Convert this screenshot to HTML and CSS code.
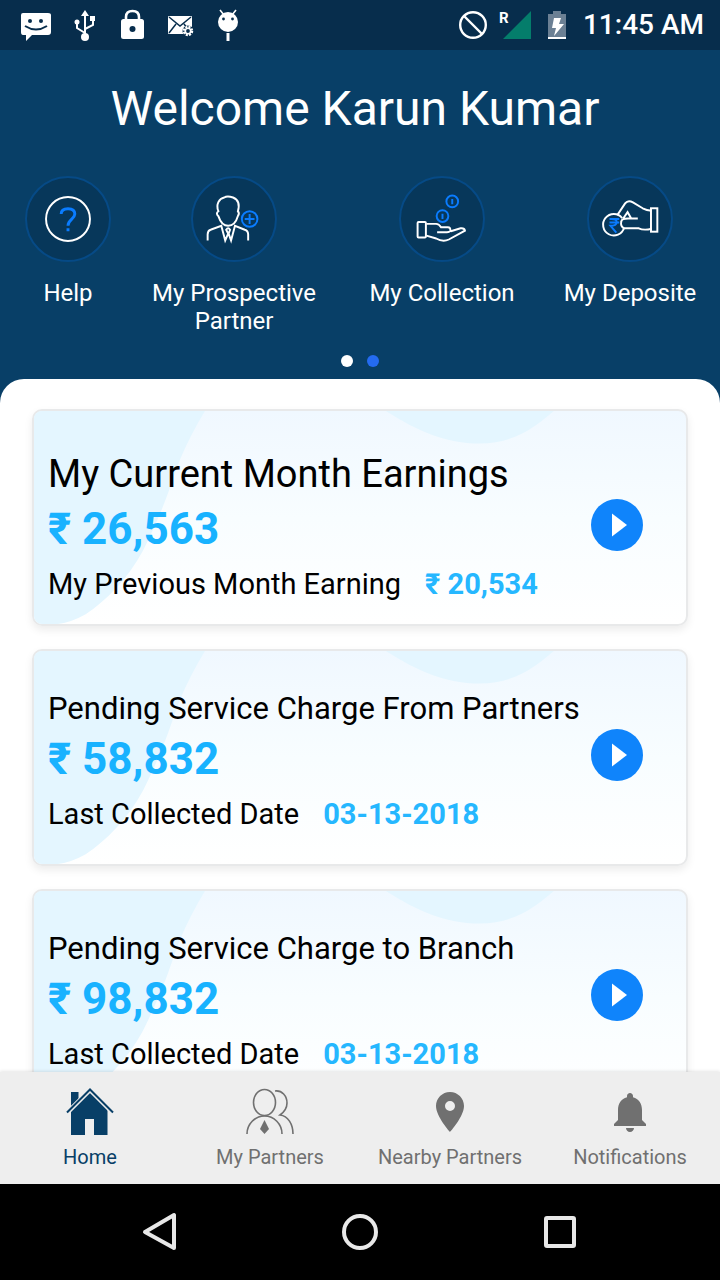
FILE: index.html
```html
<!DOCTYPE html>
<html lang="en">
<head>
<meta charset="utf-8">
<meta name="viewport" content="width=device-width, initial-scale=1">
<title>Partner Home</title>
<link rel="stylesheet" href="styles.css">
</head>
<body>
<svg width="0" height="0" class="defs" aria-hidden="true">
  <symbol id="card-decor" viewBox="0 0 656 216" preserveAspectRatio="none">
    <path d="M0 0H172Q157 25 147 49C137 75 134 92 110 141C94 171 72 193 52 206Q38 214 24 216H0Z"/>
    <path d="M354 0C385 20 415 33 448 33C485 33 505 15 523 0Z"/>
  </symbol>
  <symbol id="play" viewBox="0 0 52 52">
    <circle cx="26" cy="26" r="26" fill="#0f84fb"/>
    <path d="M21 14.500L36 26L21 37.500Z" fill="#fff"/>
  </symbol>
</svg>
<div class="app">
  <div class="status">
    <div class="status-left">
      <svg width="32" height="32" viewBox="0 0 32 32"><path fill="#fff" d="M3 5H28Q31 5 31 7V24Q31 27 28 27H12L6 33V27H3Q1 27 1 24V7Q1 5 3 5Z" transform="translate(0 -1)"/><circle cx="10" cy="12" r="2" fill="#072d4c"/><circle cx="21" cy="12" r="2" fill="#072d4c"/><path d="M5 17Q16 24 27 17" fill="none" stroke="#072d4c" stroke-width="2"/></svg>
      <svg width="32" height="32" viewBox="0 0 32 32"><g fill="none" stroke="#fff" stroke-width="2"><path d="M17 27V7M17 24L9 19V13M17 20L25 16V10"/></g><path fill="#fff" d="M17 1L21 7H13ZM22 7H27V12H22Z"/><circle cx="9" cy="13" r="2.500" fill="#fff"/><circle cx="17" cy="28" r="4" fill="#fff"/></svg>
      <svg width="32" height="32" viewBox="0 0 32 32"><path d="M10 11V8Q10 2 16.500 2Q23 2 23 8V11" fill="none" stroke="#fff" stroke-width="2.600"/><rect x="5" y="10" width="23" height="20" rx="2.500" fill="#fff"/><circle cx="16.500" cy="20" r="3" fill="#072d4c"/></svg>
      <svg width="32" height="32" viewBox="0 0 32 32"><rect x="4" y="7" width="24" height="18" rx="1" fill="#fff"/><path d="M5 8L16 17L27 8M5 24L12 15M27 24L20 15" fill="none" stroke="#072d4c" stroke-width="1.500"/><circle cx="24" cy="22" r="5.500" fill="#072d4c"/><circle cx="24" cy="22" r="4" fill="none" stroke="#fff" stroke-width="2.500" stroke-dasharray="2 1.140"/><circle cx="24" cy="22" r="2.700" fill="none" stroke="#fff" stroke-width="1.600"/></svg>
      <svg width="32" height="32" viewBox="0 0 32 32"><circle cx="16" cy="13" r="10" fill="#fff"/><path d="M8 1L12 6M24 1L20 6" stroke="#fff" stroke-width="1.600"/><path d="M14.500 24H17.500V32H14.500Z" fill="#fff"/><circle cx="11.500" cy="10" r="1.400" fill="#072d4c"/><circle cx="20.500" cy="10" r="1.400" fill="#072d4c"/></svg>
    </div>
    <div class="status-right">
      <svg width="28" height="28" viewBox="0 0 28 28" fill="none" stroke="#fff" stroke-width="2.400"><circle cx="14" cy="14" r="12.800"/><path d="M5 5L23 23"/></svg>
      <div class="signal"><span class="roaming">R</span><svg width="28" height="28" viewBox="0 0 28 28"><path d="M28 0V28H0Z" fill="#047d6b"/></svg></div>
      <svg width="20" height="30" viewBox="0 0 20 30"><path d="M6 1H14V4H19V27H1V4H6Z" fill="#6b8094"/><path d="M1 27H19V29H1Z" fill="#fff"/><path d="M7 8H14L12 14H17L7 26L9 18H5Z" fill="#fff"/></svg>
      <time>11:45 AM</time>
    </div>
  </div>

  <header class="header">
    <h1>Welcome Karun Kumar</h1>
    <div class="shortcuts">
      <button type="button" class="shortcut">
        <svg class="disc" viewBox="0 0 84 84"><circle cx="42" cy="42" r="22.500"/><path class="blue bold" d="M35 37Q35 31.500 42 31.500Q49 31.500 49 37C49 42 42 42.500 42 49M42 51.500V54.500"/></svg>
        <span>Help</span>
      </button>
      <button type="button" class="shortcut">
        <svg class="disc" viewBox="0 0 84 84"><path d="M26 34C23 27 27 21 32 20C35 18 38 19 41 20C46 22 48 27 46 34Q48 36 46 39C44 46 41 49 36 49C31 49 28 45 26 39Q23 36 26 34ZM15 64V58Q15 54 18 53L29 49L33 64L36 57L34 53Q36 50 38 53L36.500 57L39 64L43 49L53 53Q56.500 54 56.500 58V64"/><g class="blue"><circle cx="58" cy="42" r="8"/><path d="M58 37V47M53 42H63"/></g></svg>
        <span>My Prospective Partner</span>
      </button>
      <button type="button" class="shortcut">
        <svg class="disc" viewBox="0 0 84 84"><rect x="17" y="45" width="8.500" height="16" rx="1"/><path d="M26 47H36Q39 47 41 50.500H48Q51 50.500 50.500 54Q50 55.500 47 55.500H37M51 54.500L61 51.500Q65 51 65.500 54L49 63Q43 66 36 62L26 59"/><g class="blue"><circle cx="52.500" cy="24" r="6"/><circle cx="42.500" cy="39" r="6"/><path d="M52.500 21.500V27M42.500 36.500V42"/></g></svg>
        <span>My Collection</span>
      </button>
      <button type="button" class="shortcut">
        <svg class="disc" viewBox="0 0 84 84"><path d="M29 38L37 26Q40 22 45 25L55 31Q59 33 64 33.500M64 52Q56 54 51 51.500H36Q32 50 33 45C33 42 37 41.500 40 41.500H50M35 41.500L39.500 35L43 41"/><rect x="63.500" y="31" width="6.500" height="24"/><path d="M34 41A11 11 0 1 0 36 51"/><path class="blue" d="M21 42H31M21 45.500H31M23 42Q28.500 42 28.500 45.500Q28 49 22 49L28 56"/></svg>
        <span>My Deposite</span>
      </button>
    </div>
    <div class="dots"><i class="dot"></i><i class="dot dot-blue"></i></div>
  </header>

  <main class="sheet">
    <section class="card">
      <svg class="decor" aria-hidden="true"><use href="#card-decor"/></svg>
      <h2 class="card-title large">My Current Month Earnings</h2>
      <div class="amount-row"><strong class="amount">₹ 26,563</strong><button type="button" class="play" aria-label="Open current month earnings"><svg width="52" height="52"><use href="#play"/></svg></button></div>
      <p class="detail"><span>My Previous Month Earning</span><strong>₹ 20,534</strong></p>
    </section>
    <section class="card">
      <svg class="decor" aria-hidden="true"><use href="#card-decor"/></svg>
      <h2 class="card-title">Pending Service Charge From Partners</h2>
      <div class="amount-row"><strong class="amount">₹ 58,832</strong><button type="button" class="play" aria-label="Open service charge from partners"><svg width="52" height="52"><use href="#play"/></svg></button></div>
      <p class="detail"><span>Last Collected Date</span><strong>03-13-2018</strong></p>
    </section>
    <section class="card">
      <svg class="decor" aria-hidden="true"><use href="#card-decor"/></svg>
      <h2 class="card-title">Pending Service Charge to Branch</h2>
      <div class="amount-row"><strong class="amount">₹ 98,832</strong><button type="button" class="play" aria-label="Open service charge to branch"><svg width="52" height="52"><use href="#play"/></svg></button></div>
      <p class="detail"><span>Last Collected Date</span><strong>03-13-2018</strong></p>
    </section>
  </main>

  <nav class="tabs">
    <a href="#" class="tab active">
      <svg width="48" height="48" viewBox="0 0 48 48"><path fill="currentColor" d="M5 4H12.500V13L5 20ZM5 21L24 4L41.500 21V47H28V31H19V47H5Z"/><path d="M1 25L24 2L47 25" fill="none" stroke="#eee" stroke-width="4.500"/><path d="M1 24.500L24 1.500L47 24.500" fill="none" stroke="currentColor" stroke-width="2"/></svg>
      <span>Home</span>
    </a>
    <a href="#" class="tab">
      <svg width="48" height="48" viewBox="0 0 48 48"><g fill="none" stroke="currentColor" stroke-width="1.600"><ellipse cx="18.500" cy="14.500" rx="11" ry="13"/><path d="M1 46C1 36 9 28 18.500 28C28 28 36 36 36 46M29 3C36 2 41 8 41 15Q41 22 34 27C42 28 47 36 47 46"/></g><path fill="currentColor" d="M18.500 32L23 41L18.500 46L14 41Z"/></svg>
      <span>My Partners</span>
    </a>
    <a href="#" class="tab">
      <svg width="48" height="48" viewBox="0 0 24 24"><path fill="currentColor" fill-rule="evenodd" d="M12 2C8.130 2 5 5.130 5 9c0 5.250 7 13 7 13s7-7.750 7-13c0-3.870-3.130-7-7-7zm0 9.500a2.500 2.500 0 0 1 0-5 2.500 2.500 0 0 1 0 5z"/></svg>
      <span>Nearby Partners</span>
    </a>
    <a href="#" class="tab">
      <svg width="48" height="48" viewBox="0 0 24 24"><path fill="currentColor" d="M12 22c1.100 0 2-.9 2-2h-4c0 1.100.89 2 2 2zm6-6v-5c0-3.070-1.640-5.640-4.500-6.320V4c0-.83-.67-1.500-1.500-1.500s-1.500.67-1.500 1.500v.68C7.630 5.360 6 7.920 6 11v5l-2 2v1h16v-1l-2-2z"/></svg>
      <span>Notifications</span>
    </a>
  </nav>

  <div class="system">
    <button type="button" aria-label="Back"><svg width="40" height="40" viewBox="0 0 40 40"><path d="M34 3V36L5 20Z"/></svg></button>
    <button type="button" aria-label="Home screen"><svg width="40" height="40" viewBox="0 0 40 40"><circle cx="20" cy="20" r="16"/></svg></button>
    <button type="button" aria-label="Recent apps"><svg width="40" height="40" viewBox="0 0 40 40"><rect x="6" y="6" width="28" height="28" rx="1"/></svg></button>
  </div>
</div>
</body>
</html>
```
FILE: styles.css
```css
* { box-sizing: border-box; }

body {
  margin: 0;
  font-family: Roboto, "Noto Sans", sans-serif;
  color: #000;
}

h1, h2, p { margin: 0; font-weight: 400; }

button {
  margin: 0;
  padding: 0;
  border: 0;
  background: none;
  color: inherit;
  font: inherit;
}

svg { display: block; }

.defs { position: absolute; }

.app {
  display: flex;
  flex-direction: column;
  height: 100vh;
  overflow: hidden;
  background: #083f67;
}

/* Status bar */
.status {
  flex: none;
  display: flex;
  align-items: center;
  justify-content: space-between;
  height: 50px;
  padding: 0 16px 0 20px;
  background: #072d4c;
  color: #fff;
}

.status-left { display: flex; gap: 16px; }

.status-right {
  display: flex;
  align-items: center;
  gap: 16px;
  font-size: 28px;
  line-height: 36px;
  font-weight: 500;
}

.signal { position: relative; }

.roaming {
  position: absolute;
  left: -4px;
  top: 0;
  font-size: 15px;
  line-height: 15px;
  font-weight: 700;
}

/* Header */
.header { flex: none; color: #fff; }

.header h1 {
  padding: 28px 10px 0 0;
  font-size: 48px;
  line-height: 62px;
  text-align: center;
}

.shortcuts {
  display: grid;
  grid-template-columns: 34fr 49fr 55fr 39fr;
  margin-top: 36px;
  padding-right: 12px;
}

.shortcut {
  display: flex;
  flex-direction: column;
  align-items: center;
  gap: 17px;
  font-size: 24px;
  line-height: 28px;
}

.shortcut span { max-width: 180px; }

.disc {
  width: 86px;
  height: 86px;
  border: 2px solid #064a86;
  border-radius: 50%;
  background: #07375a;
  fill: none;
  stroke: #fff;
  stroke-width: 2;
}

.disc .blue { stroke: #0a7cff; }
.disc .bold { stroke-width: 3; }

.dots {
  display: flex;
  justify-content: center;
  gap: 14px;
  padding: 20px 0 12px;
}

.dot {
  width: 12px;
  height: 12px;
  border-radius: 50%;
  background: #fff;
}

.dot-blue { background: #246bf0; }

/* Cards */
.sheet {
  flex: 1;
  display: flex;
  flex-direction: column;
  gap: 23px;
  min-height: 0;
  overflow: hidden;
  padding: 30px 32px;
  border-radius: 24px 24px 0 0;
  background: #fff;
}

.card {
  position: relative;
  flex: none;
  min-height: 217px;
  padding: 38px 43px 0 14px;
  overflow: hidden;
  border: 2px solid #e8e9ea;
  border-radius: 10px;
  background: linear-gradient(#f0f8ff, #f8fdff 50%, #fff);
  box-shadow: 0 4px 8px rgba(0, 0, 0, 0.08);
}

.card > * { position: relative; }

.card > .decor {
  position: absolute;
  inset: 0;
  width: 100%;
  height: 100%;
  fill: #e4f6ff;
}

.card-title { font-size: 31px; line-height: 40px; }
.card-title.large { font-size: 38px; line-height: 50px; }

.amount-row {
  display: flex;
  align-items: center;
  justify-content: space-between;
}

.amount {
  font-size: 44px;
  line-height: 60px;
  font-weight: 700;
  color: #18b2ff;
}

.play { margin-bottom: 8px; }

.detail {
  display: flex;
  gap: 24px;
  font-size: 29px;
  line-height: 50px;
}

.detail strong { font-weight: 700; color: #25b7ff; }

/* Bottom tabs */
.tabs {
  position: relative;
  flex: none;
  display: grid;
  grid-template-columns: repeat(4, 1fr);
  height: 112px;
  padding-top: 16px;
  background: #eee;
  box-shadow: 0 -1px 3px rgba(0, 0, 0, 0.1);
}

.tab {
  display: flex;
  flex-direction: column;
  align-items: center;
  gap: 8px;
  color: #707070;
  font-size: 20px;
  line-height: 26px;
  text-decoration: none;
}

.tab.active { color: #083f67; }

/* System navigation */
.system {
  flex: none;
  display: flex;
  align-items: center;
  justify-content: center;
  gap: 160px;
  height: 96px;
  background: #000;
}

.system svg {
  fill: none;
  stroke: #e8e8e8;
  stroke-width: 4;
  stroke-linejoin: round;
}
```
